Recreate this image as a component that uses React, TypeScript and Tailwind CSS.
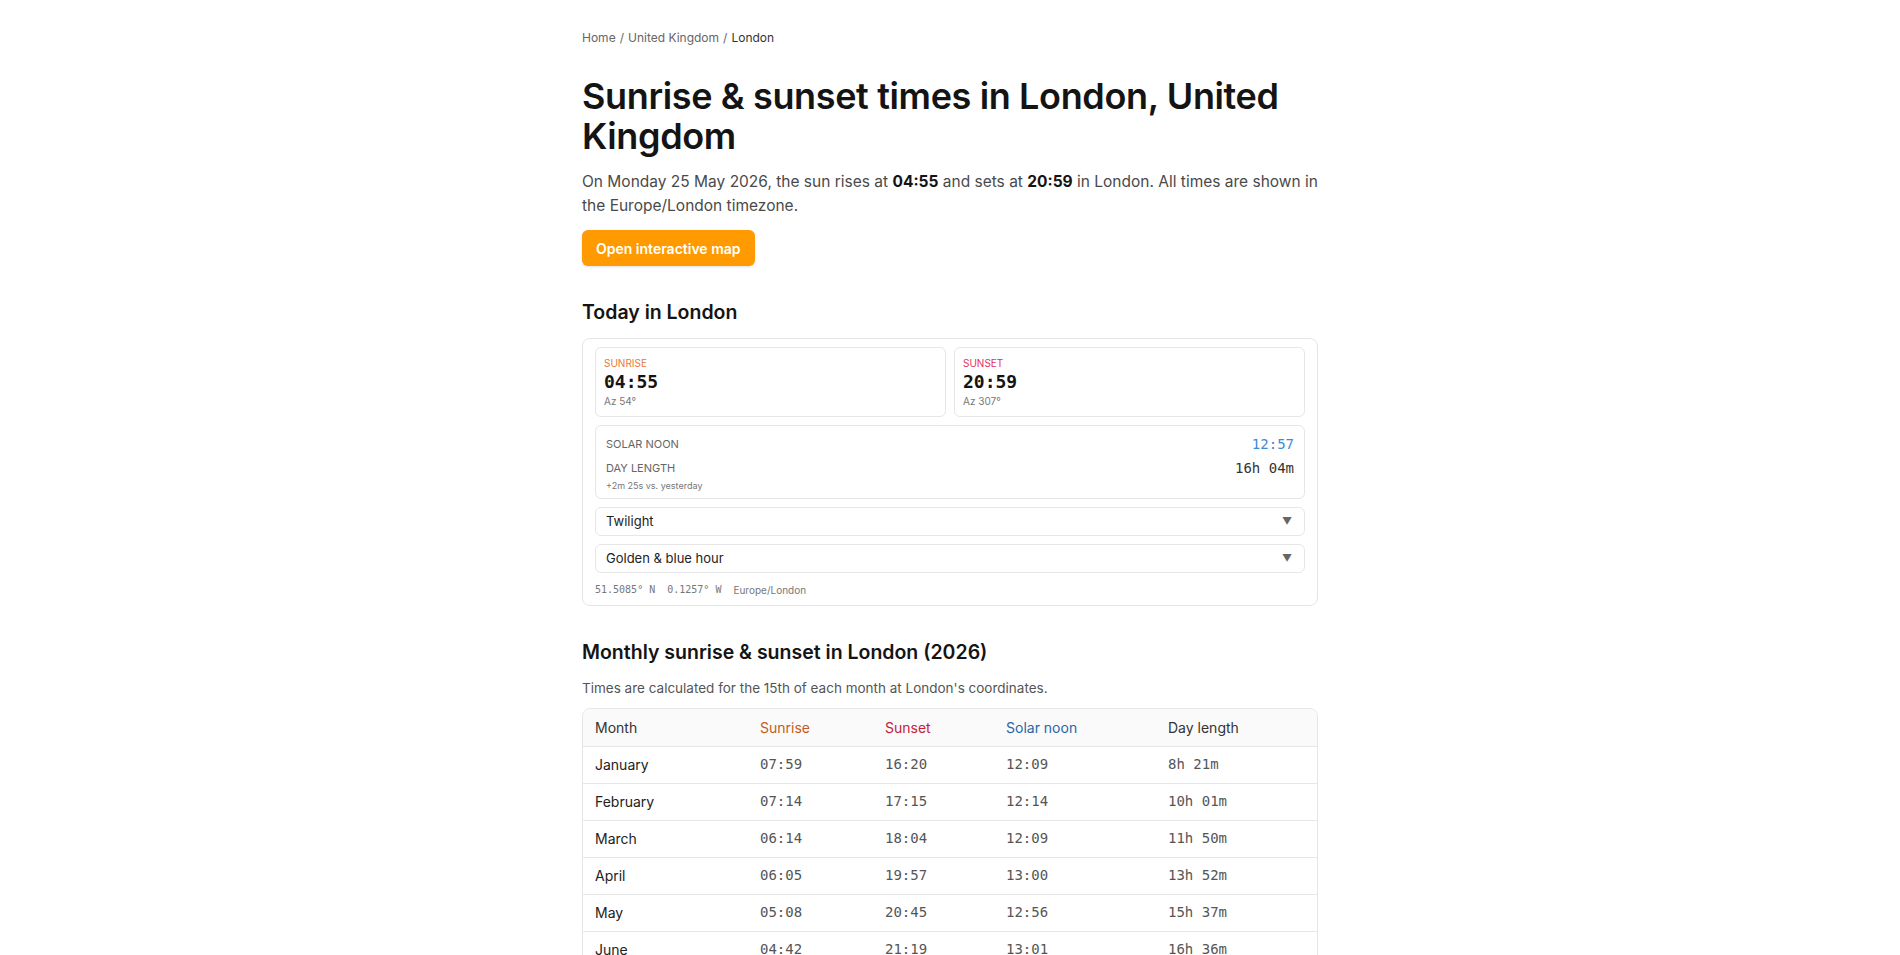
const MONTHS = [
  { m: "January",   rise: "07:59", set: "16:20", noon: "12:09", len: "8h 21m" },
  { m: "February",  rise: "07:14", set: "17:15", noon: "12:14", len: "10h 01m" },
  { m: "March",     rise: "06:14", set: "18:04", noon: "12:09", len: "11h 50m" },
  { m: "April",     rise: "06:05", set: "19:57", noon: "13:00", len: "13h 52m" },
  { m: "May",       rise: "05:08", set: "20:45", noon: "12:56", len: "15h 37m" },
  { m: "June",      rise: "04:42", set: "21:19", noon: "13:01", len: "16h 36m" },
  { m: "July",      rise: "04:58", set: "21:13", noon: "13:06", len: "16h 15m" },
  { m: "August",    rise: "05:44", set: "20:27", noon: "13:05", len: "14h 43m" },
  { m: "September", rise: "06:33", set: "19:21", noon: "12:56", len: "12h 48m" },
  { m: "October",   rise: "07:22", set: "18:13", noon: "12:46", len: "10h 51m" },
  { m: "November",  rise: "07:17", set: "16:18", noon: "11:46", len: "9h 01m" },
  { m: "December",  rise: "08:00", set: "15:52", noon: "11:56", len: "7h 52m" },
];

const mono = "font-['DejaVu_Sans_Mono',monospace]";

function Disclosure({ label }: { label: string }) {
  return (
    <div className="h-[29px] flex items-center justify-between pl-2.5 pr-3 border border-[#e6e6e6] rounded-md">
      <span className="text-[13px] text-[#222]">{label}</span>
      <span className="text-[10px] text-[#666]">▼</span>
    </div>
  );
}

export default function App() {
  return (
    <div className="min-h-screen bg-white text-[#1a1a1a] font-['Inter',sans-serif]">
      <div className="max-w-3xl mx-auto px-4 pt-7 pb-16">
        <nav className="text-[12px] leading-5 text-[#666] flex gap-1">
          <span>Home</span>
          <span>/</span>
          <span>United Kingdom</span>
          <span>/</span>
          <span className="text-[#333]">London</span>
        </nav>

        <h1 className="mt-7 text-[36px] leading-10 font-semibold tracking-[-0.01em] text-[#141414]">
          Sunrise &amp; sunset times in London, United Kingdom
        </h1>
        <p className="mt-3.5 text-[15.5px] leading-6 text-[#4a4a4a]">
          On Monday 25 May 2026, the sun rises at <strong className="text-[#141414] font-bold">04:55</strong> and sets at{" "}
          <strong className="text-[#141414] font-bold">20:59</strong> in London. All times are shown in the Europe/London timezone.
        </p>
        <button className="mt-3 h-9 px-3.5 rounded-md bg-[#ff9a00] text-white text-[14px] font-semibold shadow-sm">
          Open interactive map
        </button>

        <h2 className="mt-8 text-[19.5px] leading-7 font-semibold text-[#141414]">Today in London</h2>
        <div className="mt-3 border border-[#e6e6e6] rounded-lg px-3 pt-2 pb-2">
          <div className="flex flex-col gap-2">
            <div className="grid grid-cols-2 gap-2">
              <div className="border border-[#e6e6e6] rounded-md p-2">
                <div className="text-[10px] leading-[14px] text-[#e8773a] uppercase">Sunrise</div>
                <div className={`${mono} text-[18px] leading-6 font-bold text-[#141414]`}>04:55</div>
                <div className="text-[10px] leading-[14px] text-[#777]">Az 54°</div>
              </div>
              <div className="border border-[#e6e6e6] rounded-md p-2">
                <div className="text-[10px] leading-[14px] text-[#e2305a] uppercase">Sunset</div>
                <div className={`${mono} text-[18px] leading-6 font-bold text-[#141414]`}>20:59</div>
                <div className="text-[10px] leading-[14px] text-[#777]">Az 307°</div>
              </div>
            </div>
            <div className="border border-[#e6e6e6] rounded-md pl-2.5 pr-2.5 pt-2.5 pb-1.5">
              <div className="flex items-center justify-between h-4">
                <span className="text-[11px] text-[#666] uppercase">Solar noon</span>
                <span className={`${mono} text-[14px] text-[#3d8bd4]`}>12:57</span>
              </div>
              <div className="mt-2 flex items-center justify-between h-4">
                <span className="text-[11px] text-[#666] uppercase">Day length</span>
                <span className={`${mono} text-[14px] text-[#333]`}>16h 04m</span>
              </div>
              <div className="mt-1 text-[9px] leading-3 text-[#777]">+2m 25s vs. yesterday</div>
            </div>
            <Disclosure label="Twilight" />
            <Disclosure label="Golden & blue hour" />
          </div>
          <div className="mt-2.5 flex items-center gap-3 text-[10px] leading-[14px] text-[#777]">
            <span className={mono}>51.5085° N</span>
            <span className={mono}>0.1257° W</span>
            <span>Europe/London</span>
          </div>
        </div>

        <h2 className="mt-8 text-[19.5px] leading-7 font-semibold text-[#141414]">
          Monthly sunrise &amp; sunset in London (2026)
        </h2>
        <p className="mt-3 text-[13.5px] leading-5 text-[#555]">
          Times are calculated for the 15th of each month at London's coordinates.
        </p>
        <div className="mt-2.5 border border-[#e6e6e6] rounded-lg overflow-hidden">
          <table className="w-full text-left border-collapse">
            <thead>
              <tr className="bg-[#fafafa] h-[37px] text-[14px]">
                <th className="w-[165px] pl-3 font-normal text-[#333]">Month</th>
                <th className="w-[125px] pl-3 font-normal text-[#c65a1e]">Sunrise</th>
                <th className="w-[121px] pl-3 font-normal text-[#c2233b]">Sunset</th>
                <th className="w-[162px] pl-3 font-normal text-[#2a66a6]">Solar noon</th>
                <th className="pl-3 font-normal text-[#333]">Day length</th>
              </tr>
            </thead>
            <tbody>
              {MONTHS.map(r => (
                <tr key={r.m} className="h-[37px] border-t border-[#e6e6e6]">
                  <td className="pl-3 text-[14px] text-[#222]">{r.m}</td>
                  <td className={`pl-3 ${mono} text-[14px] text-[#555]`}>{r.rise}</td>
                  <td className={`pl-3 ${mono} text-[14px] text-[#555]`}>{r.set}</td>
                  <td className={`pl-3 ${mono} text-[14px] text-[#555]`}>{r.noon}</td>
                  <td className={`pl-3 ${mono} text-[14px] text-[#555]`}>{r.len}</td>
                </tr>
              ))}
            </tbody>
          </table>
        </div>
      </div>
    </div>
  );
}
